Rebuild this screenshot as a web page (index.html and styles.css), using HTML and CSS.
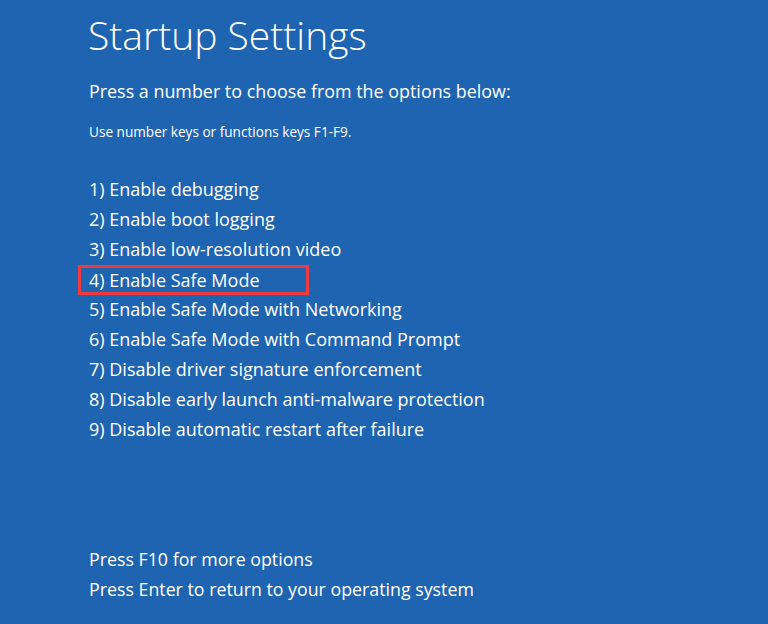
FILE: index.html
```html
<!DOCTYPE html>
<html lang="en">
<head>
    <meta charset="UTF-8">
    <meta name="viewport" content="width=device-width, initial-scale=1.0">
    <title>Startup Settings</title>
    <link rel="stylesheet" href="styles.css">
</head>
<body>
    <div class="screen">
        <h1>Startup Settings</h1>
        <p class="lead">Press a number to choose from the options below:</p>
        <p class="hint">Use number keys or functions keys F1-F9.</p>

        <ul class="options">
            <li>1) Enable debugging</li>
            <li>2) Enable boot logging</li>
            <li>3) Enable low-resolution video</li>
            <li class="selected">4) Enable Safe Mode</li>
            <li>5) Enable Safe Mode with Networking</li>
            <li>6) Enable Safe Mode with Command Prompt</li>
            <li>7) Disable driver signature enforcement</li>
            <li>8) Disable early launch anti-malware protection</li>
            <li>9) Disable automatic restart after failure</li>
        </ul>

        <div class="footer">
            <p>Press F10 for more options</p>
            <p>Press Enter to return to your operating system</p>
        </div>
    </div>
</body>
</html>
```

FILE: styles.css
```css
html, body {
    margin: 0;
    height: 100%;
}
body {
    background: #1f64b0;
    color: #fff;
    font-family: "Open Sans", "Noto Sans", Arial, sans-serif;
    overflow: hidden;
}
.screen {
    padding: 11px 0 0 89px;
}
h1 {
    margin: 0;
    font-size: 39px;
    font-weight: 300;
    line-height: 48px;
    margin-left: -1px;
}
.lead {
    margin: 17px 0 0;
    font-size: 17.9px;
    line-height: 30px;
}
.hint {
    margin: 16px 0 0;
    font-size: 13.6px;
    line-height: 20px;
}
.options {
    list-style: none;
    margin: 32px 0 0;
    padding: 0;
}
.options li {
    font-size: 18px;
    line-height: 30px;
    height: 30px;
}
.options li.selected {
    box-sizing: border-box;
    width: 231px;
    margin: 1px 0 -1px -11px;
    padding-left: 8px;
    border: 3px solid #ef3b3f;
    line-height: 24px;
    height: 30px;
}
.footer {
    margin-top: 100px;
}
.footer p {
    margin: 0;
    font-size: 17.8px;
    line-height: 30px;
}
```
